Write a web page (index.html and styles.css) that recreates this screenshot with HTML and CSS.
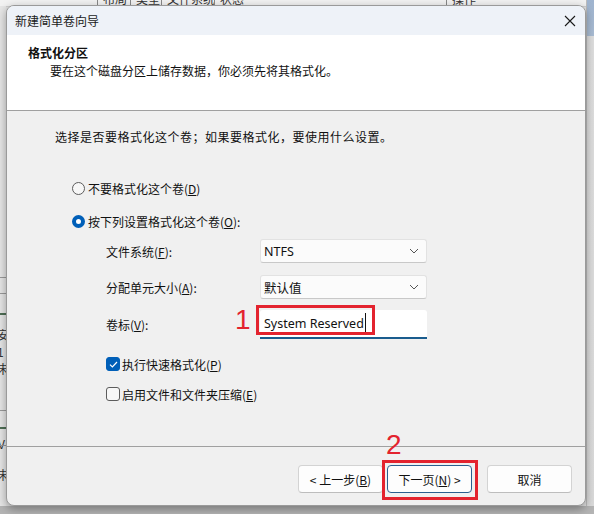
FILE: index.html
```html
<!DOCTYPE html>
<html lang="zh-CN">
<head>
<meta charset="utf-8">
<title>新建简单卷向导</title>
<link rel="stylesheet" href="styles.css">
</head>
<body>
<div class="desktop">
  <div class="bg-header">
    <span class="col c1">布局</span><span class="col c2">类型</span><span class="col c3">文件系统</span><span class="col c4">状态</span><span class="col c5">操作</span>
  </div>
  <div class="bg-left">
    <div class="bl-line l1"></div>
    <div class="bl-line l2"></div>
    <div class="bl-green g1"></div>
    <div class="bl-text t1">安<br>1<br>未</div>
    <div class="bl-line l3"></div>
    <div class="bl-green g2"></div>
    <div class="bl-text t2">V</div>
    <div class="bl-line l4"></div>
    <div class="bl-text t3">未</div>
  </div>
  <div class="bg-right"></div>
  <div class="bg-bottom"></div>

  <div class="dialog">
    <div class="titlebar">
      <span class="title">新建简单卷向导</span>
      <span class="close"><svg width="12" height="12" viewBox="0 0 12 12"><path d="M1 1 L11 11 M11 1 L1 11" stroke="#1a1a1a" stroke-width="1.1" fill="none"/></svg></span>
    </div>
    <div class="header">
      <div class="h-title">格式化分区</div>
      <div class="h-sub">要在这个磁盘分区上储存数据，你必须先将其格式化。</div>
    </div>
    <div class="body">
      <div class="intro">选择是否要格式化这个卷；如果要格式化，要使用什么设置。</div>
      <div class="opt radio-row r1"><span class="radio"></span><span>不要格式化这个卷(<u>D</u>)</span></div>
      <div class="opt radio-row r2"><span class="radio on"></span><span>按下列设置格式化这个卷(<u>O</u>):</span></div>
      <div class="form">
        <label class="lbl">文件系统(<u>F</u>):</label>
        <div class="combo"><span>NTFS</span><svg class="chev" width="10" height="6" viewBox="0 0 10 6"><path d="M1 1 L5 5 L9 1" stroke="#555" stroke-width="1" fill="none"/></svg></div>
        <label class="lbl">分配单元大小(<u>A</u>):</label>
        <div class="combo"><span>默认值</span><svg class="chev" width="10" height="6" viewBox="0 0 10 6"><path d="M1 1 L5 5 L9 1" stroke="#555" stroke-width="1" fill="none"/></svg></div>
        <label class="lbl lbl-last">卷标(<u>V</u>):</label>
        <div class="textbox"><span class="val">System Reserved</span><span class="caret"></span></div>
      </div>
      <div class="opt check-row c1"><span class="check on"><svg width="9" height="7" viewBox="0 0 9 7"><path d="M1 3.6 L3.4 6 L8 1" stroke="#fff" stroke-width="1.2" fill="none"/></svg></span><span>执行快速格式化(<u>P</u>)</span></div>
      <div class="opt check-row c2"><span class="check"></span><span>启用文件和文件夹压缩(<u>E</u>)</span></div>
    </div>
    <div class="footer">
      <button class="btn">&lt; 上一步(<u>B</u>)</button>
      <button class="btn primary">下一页(<u>N</u>) &gt;</button>
      <button class="btn cancel">取消</button>
    </div>

    <span class="mark num1">1</span>
    <span class="mark box1"></span>
    <span class="mark num2">2</span>
    <span class="mark box2"></span>
  </div>
</div>
</body>
</html>
```
FILE: styles.css
```css
html, body {
  margin: 0;
  padding: 0;
}
body {
  width: 594px;
  height: 514px;
  overflow: hidden;
  background: #e2e2e2;
  font-family: "Noto Sans", "Noto Sans CJK SC", sans-serif;
  font-size: 12px;
  color: #1b1b1b;
}
.desktop {
  position: relative;
  width: 594px;
  height: 514px;
}
u { text-decoration: underline; text-underline-offset: 1px; }

/* background window pieces */
.bg-header {
  position: absolute;
  left: 0; top: -9px;
  width: 594px; height: 15px;
  background: #f2f2f2;
  border-bottom: 1px solid #cfcfcf;
  font-family: "Noto Sans CJK SC", sans-serif;
  font-size: 12px;
  line-height: 15px;
  color: #333;
}
.col {
  position: absolute;
  top: 0;
  border-left: 1px solid #888;
  padding-left: 5px;
}
.col.c1 { left: 97px; }
.col.c2 { left: 130px; }
.col.c3 { left: 161px; }
.col.c4 { left: 214px; }
.col.c5 { left: 446px; }
.bg-left {
  position: absolute;
  left: 0; top: 6px;
  width: 6px; height: 500px;
  background: #e6e6e6;
  overflow: hidden;
}
.bl-line { position: absolute; left: 0; width: 6px; height: 1px; background: #9a9a9a; }
.bl-line.l1 { top: 271px; }
.bl-line.l2 { top: 287px; }
.bl-line.l3 { top: 404px; }
.bl-line.l4 { top: 439px; }
.bl-green { position: absolute; left: 0; width: 6px; height: 2px; background: #4f6f55; }
.bl-green.g1 { top: 307px; }
.bl-green.g2 { top: 421px; }
.bl-text {
  position: absolute; left: -3px;
  font-family: "Noto Sans CJK SC", sans-serif;
  font-size: 12px; line-height: 17px; color: #333;
}
.bl-text.t1 { top: 320px; }
.bl-text.t2 { top: 429px; left: -2px; }
.bl-text.t3 { top: 460px; }
.bg-right {
  position: absolute;
  left: 586px; top: 0;
  width: 8px; height: 514px;
  background: linear-gradient(#9fb4cf 0, #a9bcd3 36px, #dedede 36px, #dadada 100%);
  border-left: 1px solid #bdbdbd;
}
.bg-bottom {
  position: absolute;
  left: 0; top: 506px;
  width: 594px; height: 8px;
  background: #b4b4b4;
}

/* dialog */
.dialog {
  position: absolute;
  left: 6px; top: 5px;
  width: 580px; height: 501px;
  box-sizing: border-box;
  background: #f0f0f0;
  border: 1px solid #9a9a9a;
  border-radius: 8px;
  box-shadow: 0 3px 10px rgba(0,0,0,0.35);
  display: flex;
  flex-direction: column;
  overflow: hidden;
  font-family: "Noto Sans CJK SC", sans-serif;
}
.titlebar {
  height: 29px;
  flex: none;
  background: #eef2f8;
  display: flex;
  align-items: center;
  justify-content: space-between;
  padding: 0 9px 0 8px;
}
.title { font-size: 12px; line-height: 16px; color: #1a1a1a; }
.close { display: flex; align-items: center; }
.header {
  height: 76px;
  box-sizing: border-box;
  flex: none;
  background: #ffffff;
  border-bottom: 1px solid #a0a0a0;
  padding: 10px 0 0 21px;
}
.h-title { font-weight: 700; font-size: 12px; line-height: 16px; color: #111; }
.h-sub { margin: 2px 0 0 22px; font-size: 12px; line-height: 16px; color: #111; }

.body {
  flex: 1;
  padding: 18px 0 0 48px;
  position: relative;
}
.intro { font-size: 12px; line-height: 16px; color: #111; letter-spacing: 0.5px; }
.opt {
  display: flex;
  align-items: center;
  height: 20px;
  font-size: 12px;
  color: #111;
}
.radio-row.r1 { margin: 33px 0 0 17px; }
.radio-row.r2 { margin: 13px 0 0 17px; }
.radio {
  width: 13px; height: 13px;
  box-sizing: border-box;
  border: 1px solid #5c5c5c;
  border-radius: 50%;
  background: #f7f7f7;
  margin-right: 3px;
}
.radio.on {
  border: 4px solid #005fb8;
  background: #ffffff;
}
.form {
  margin: 8px 0 0 51px;
  display: grid;
  grid-template-columns: 154px 167px;
  grid-template-rows: 24px 24px 29px;
  row-gap: 12px;
  align-items: center;
}
.form > :nth-child(5), .form > :nth-child(6) { margin-top: -2px; }
.lbl { font-size: 12px; color: #111; }
.combo {
  height: 24px;
  box-sizing: border-box;
  background: #fbfbfb;
  border: 1px solid #e2e2e2;
  border-bottom-color: #c8c8c8;
  border-radius: 3px;
  display: flex;
  align-items: center;
  justify-content: space-between;
  padding: 0 7px 0 3px;
  font-size: 12px;
  color: #111;
}
.combo span { font-family: "Noto Sans", "Noto Sans CJK SC", sans-serif; font-size: 12.5px; }
.textbox {
  height: 29px;
  box-sizing: border-box;
  background: #ffffff;
  border-bottom: 2px solid #1a5c8e;
  border-radius: 3px 3px 0 0;
  display: flex;
  align-items: center;
  padding: 0 0 1px 4px;
}
.textbox .val { font-family: "Noto Sans", sans-serif; font-size: 12.5px; color: #111; }
.caret { width: 1px; height: 20px; background: #111; margin-left: 1px; }
.check-row.c1 { margin: 14px 0 0 51px; }
.check-row.c2 { margin: 10px 0 0 51px; }
.check {
  width: 14px; height: 14px;
  box-sizing: border-box;
  border: 1px solid #5c5c5c;
  border-radius: 3px;
  background: #f7f7f7;
  margin-right: 2px;
  display: flex; align-items: center; justify-content: center;
}
.check.on { background: #005fb8; border-color: #005fb8; }

.footer {
  height: 59px;
  flex: none;
  border-top: 1px solid #a0a0a0;
  display: flex;
  justify-content: flex-end;
  align-items: flex-start;
  padding: 18px 13px 0 0;
  box-sizing: border-box;
}
.btn {
  width: 85px; height: 28px;
  box-sizing: border-box;
  background: #fdfdfd;
  border: 1px solid #d3d3d3;
  border-bottom-color: #bdbdbd;
  border-radius: 4px;
  font-family: "Noto Sans CJK SC", sans-serif;
  font-size: 12px;
  color: #111;
  padding: 0;
  margin-left: 4px;
}
.btn.primary { border: 1px solid #2a5f8f; }
.btn.cancel { margin-left: 15px; }

/* annotations */
.mark { position: absolute; }
.box1 {
  left: 249px; top: 299px;
  width: 119px; height: 30px;
  box-sizing: border-box;
  border: 3px solid #e3232e;
}
.box2 {
  left: 375px; top: 454px;
  width: 96px; height: 40px;
  box-sizing: border-box;
  border: 3px solid #e3232e;
}
.num1, .num2 {
  font-family: "Liberation Sans", sans-serif;
  font-size: 28px;
  line-height: 28px;
  color: #e3232e;
}
.num1 { left: 228px; top: 300px; }
.num2 { left: 379px; top: 425px; }
```
